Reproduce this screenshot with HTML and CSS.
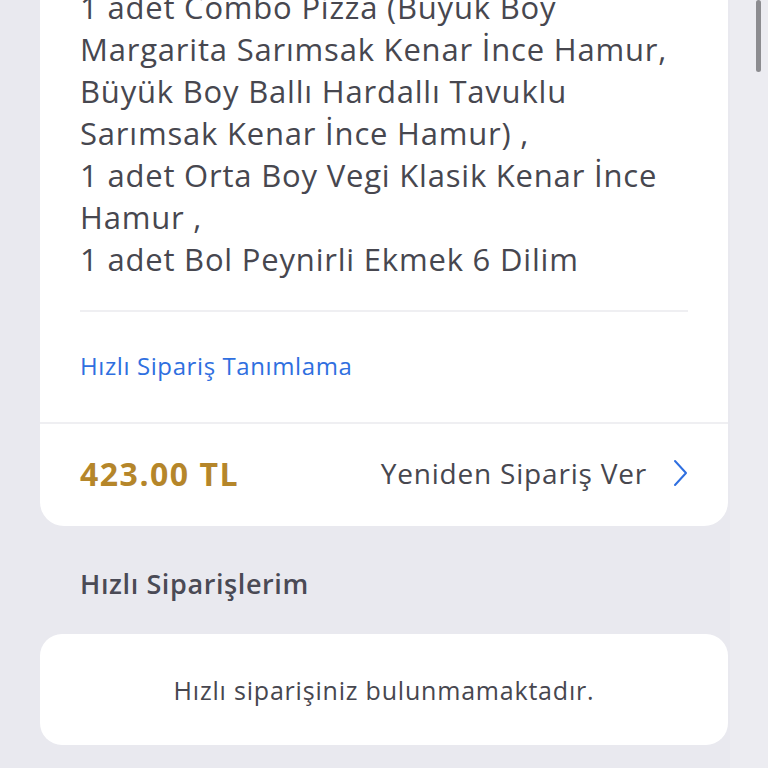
FILE: index.html
```html
<!DOCTYPE html>
<html lang="tr">
<head>
    <meta charset="UTF-8">
    <meta name="viewport" content="width=device-width, initial-scale=1.0">
    <title>Siparişlerim</title>
    <link rel="stylesheet" href="styles.css">
</head>
<body>
    <div class="page">
        <div class="card order">
            <div class="order-items">
                1 adet Combo Pizza (Büyük Boy<br>
                Margarita Sarımsak Kenar İnce Hamur,<br>
                Büyük Boy Ballı Hardallı Tavuklu<br>
                Sarımsak Kenar İnce Hamur) ,<br>
                1 adet Orta Boy Vegi Klasik Kenar İnce<br>
                Hamur ,<br>
                1 adet Bol Peynirli Ekmek 6 Dilim
            </div>
            <div class="order-link">
                <a href="#">Hızlı Sipariş Tanımlama</a>
            </div>
            <div class="order-footer">
                <span class="price">423.00 TL</span>
                <a href="#" class="reorder">
                    Yeniden Sipariş Ver
                    <svg width="16" height="28" viewBox="0 0 16 28">
                        <path d="M3 2 L14 14 L3 26" fill="none" stroke="#2f6fe0" stroke-width="2" stroke-linecap="round" stroke-linejoin="round"/>
                    </svg>
                </a>
            </div>
        </div>

        <h2 class="section-title">Hızlı Siparişlerim</h2>

        <div class="card empty">
            Hızlı siparişiniz bulunmamaktadır.
        </div>
    </div>
    <div class="scroll-track"><div class="scroll-thumb"></div></div>
</body>
</html>
```
FILE: styles.css
```css
body {
    font-family: "Open Sans", sans-serif;
    margin: 0;
    padding: 0;
    background-color: #e9e9ef;
    color: #47474f;
    overflow: hidden;
}
.page {
    padding: 0 40px;
}
.card {
    background: white;
    border-radius: 24px;
}
.order {
    margin-top: -14px;
    border-top-left-radius: 0;
    border-top-right-radius: 0;
}
.order-items {
    margin: 0 40px;
    padding-bottom: 30px;
    font-size: 31px;
    line-height: 42px;
    letter-spacing: 0.8px;
    white-space: nowrap;
    border-bottom: 2px solid #efeff2;
}
.order-link {
    padding: 38px 40px 40px;
    font-size: 24px;
    line-height: 32px;
    letter-spacing: 0.6px;
}
.order-link a {
    color: #2f6fe0;
    text-decoration: none;
}
.order-footer {
    display: flex;
    justify-content: space-between;
    align-items: center;
    height: 102px;
    padding: 0 40px;
    border-top: 2px solid #efeff2;
}
.price {
    font-size: 32px;
    font-weight: 700;
    letter-spacing: 1.5px;
    color: #b5862a;
    padding-bottom: 4px;
}
.reorder {
    display: flex;
    align-items: center;
    gap: 25px;
    color: #47474f;
    font-size: 28px;
    letter-spacing: 0.8px;
    text-decoration: none;
    padding-bottom: 4px;
}
.section-title {
    margin: 42px 40px 34px;
    font-size: 27px;
    font-weight: 600;
    line-height: 32px;
    letter-spacing: 0.6px;
    color: #4a4a55;
}
.empty {
    height: 111px;
    border-radius: 22px;
    display: flex;
    align-items: center;
    justify-content: center;
    font-size: 25px;
    letter-spacing: 0.8px;
}
.scroll-track {
    position: absolute;
    top: 0;
    right: 0;
    width: 38px;
    height: 768px;
    background: #ececf1;
}
.scroll-thumb {
    position: absolute;
    top: 0;
    right: 7px;
    width: 5px;
    height: 72px;
    border-radius: 3px;
    background: #8c8c90;
}
```
